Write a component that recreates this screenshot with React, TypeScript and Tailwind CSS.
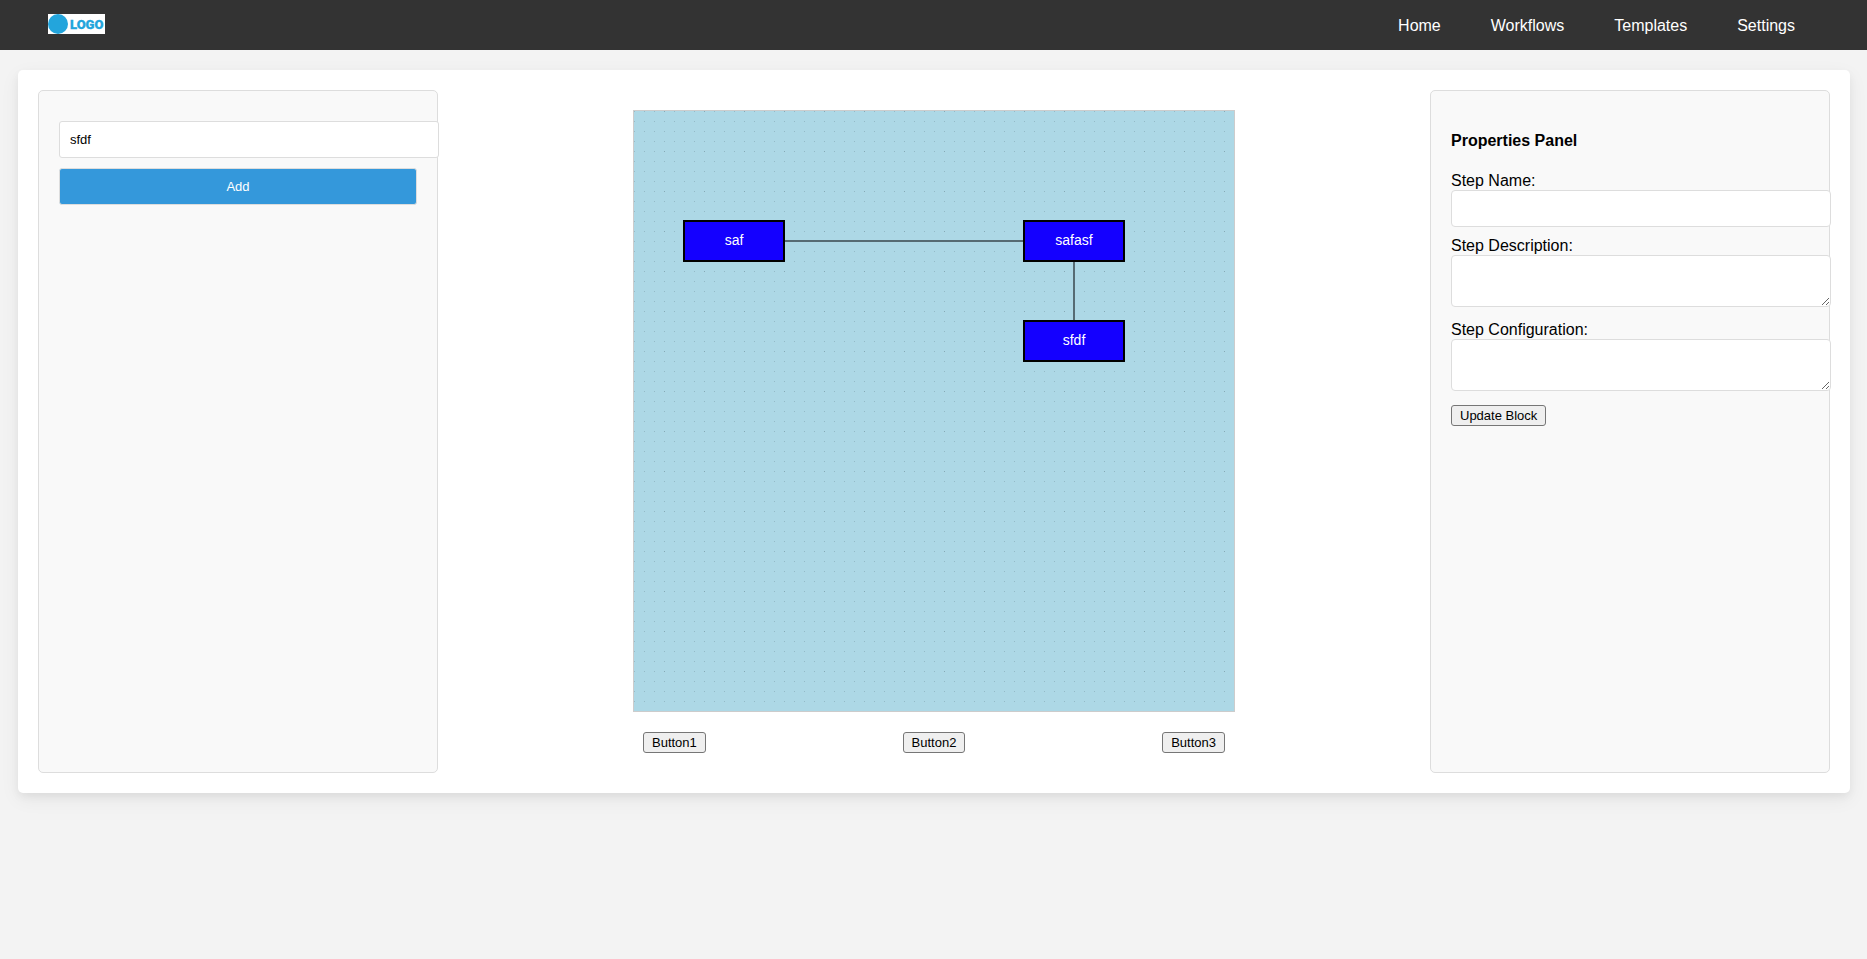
import { useState } from "react";

const navItems = ["Home", "Workflows", "Templates", "Settings"];

const blocks = [
  { label: "saf", x: 50, y: 110 },
  { label: "safasf", x: 390, y: 110 },
  { label: "sfdf", x: 390, y: 210 },
];

const fieldClass =
  "block w-[calc(100%+22px)] rounded border border-[#ddd] bg-white p-[9px] text-[13px] outline-none";
const plainButton =
  "rounded-[3px] border border-[#767676] bg-[#efefef] px-2 text-[13px] leading-[19px] text-black";

function Logo() {
  return (
    <svg width="57" height="20" viewBox="0 0 57 20" role="img" aria-label="Logo">
      <rect width="57" height="20" fill="#fff" />
      <circle cx="10" cy="10" r="10" fill="#23a5dc" />
      <text
        x="22"
        y="15"
        fill="#23a5dc"
        stroke="#23a5dc"
        strokeWidth="0.3"
        fontFamily="Roboto, sans-serif"
        fontSize="13"
        fontWeight="900"
      >
        LOGO
      </text>
    </svg>
  );
}

function Canvas() {
  return (
    <div className="h-[602px] w-[602px] border border-[#ccc] bg-[#add8e6]">
      <svg width="600" height="600" viewBox="0 0 600 600" className="block">
        <defs>
          <pattern id="dots" width="40" height="40" patternUnits="userSpaceOnUse">
            {[0, 10, 20, 30].map((y) =>
              [0, 10, 20, 30].map((x) => (
                <rect
                  key={`${x}-${y}`}
                  x={x}
                  y={y}
                  width="1"
                  height="1"
                  fill={x === 30 && y === 0 ? "#86a9b5" : "#94bac7"}
                />
              )),
            )}
          </pattern>
        </defs>
        <rect width="600" height="600" fill="url(#dots)" />
        <g stroke="#566b73" strokeWidth="2">
          <line x1="100" y1="130" x2="440" y2="130" />
          <line x1="440" y1="130" x2="440" y2="230" />
        </g>
        {blocks.map((b) => (
          <g key={b.label}>
            <rect x={b.x} y={b.y} width="100" height="40" fill="#1400ff" stroke="#000" strokeWidth="2" />
            <text
              x={b.x + 50}
              y={b.y + 24}
              fill="#fff"
              textAnchor="middle"
              fontFamily="'Liberation Sans', sans-serif"
              fontSize="14"
            >
              {b.label}
            </text>
          </g>
        ))}
      </svg>
    </div>
  );
}

export default function App() {
  const [name, setName] = useState("sfdf");

  return (
    <div className="min-h-screen bg-[#f3f3f3] font-['Liberation_Sans',Arial,sans-serif] text-base leading-[18px] text-black">
      <header className="flex h-[50px] items-start justify-between bg-[#333] pr-[52px] pl-12">
        <a href="#" className="pt-[14px]">
          <Logo />
        </a>
        <nav className="flex gap-[10px] pt-[17px]">
          {navItems.map((item) => (
            <a key={item} href="#" className="px-5 text-white">
              {item}
            </a>
          ))}
        </nav>
      </header>

      <main className="mt-5 mr-[17px] ml-[18px] flex justify-between rounded-[5px] bg-white p-5 shadow-[0_4px_8px_rgba(0,0,0,0.05),0_6px_20px_rgba(0,0,0,0.06)]">
        <aside className="w-[400px] rounded-[5px] border border-[#ddd] bg-[#f9f9f9] px-5 py-[30px]">
          <input
            aria-label="Block name"
            value={name}
            onChange={(e) => setName(e.target.value)}
            className="block h-[37px] w-[calc(100%+22px)] rounded-[3px] border border-[#ddd] bg-white px-[10px] text-[13px] outline-none"
          />
          <button
            type="button"
            className="mt-[10px] block h-[37px] w-full rounded-[3px] border border-[#ddd] bg-[#3498db] text-[13px] text-white"
          >
            Add
          </button>
        </aside>

        <section className="flex flex-col gap-5 py-5">
          <Canvas />
          <div className="flex justify-between px-[10px]">
            <button type="button" className={plainButton}>Button1</button>
            <button type="button" className={plainButton}>Button2</button>
            <button type="button" className={plainButton}>Button3</button>
          </div>
        </section>

        <aside className="w-[400px] rounded-[5px] border border-[#ddd] bg-[#f9f9f9] px-5 pt-[41px]">
          <h2 className="font-bold">Properties Panel</h2>
          <form className="mt-[22px]" onSubmit={(e) => e.preventDefault()}>
            <label htmlFor="step-name" className="block">Step Name:</label>
            <input id="step-name" className={`${fieldClass} h-[37px]`} />
            <label htmlFor="step-description" className="mt-[10px] block">Step Description:</label>
            <textarea id="step-description" className={`${fieldClass} h-[52px] resize`} />
            <label htmlFor="step-configuration" className="mt-[14px] block">Step Configuration:</label>
            <textarea id="step-configuration" className={`${fieldClass} h-[52px] resize`} />
            <button type="submit" className={`${plainButton} mt-[14px]`}>Update Block</button>
          </form>
        </aside>
      </main>
    </div>
  );
}
